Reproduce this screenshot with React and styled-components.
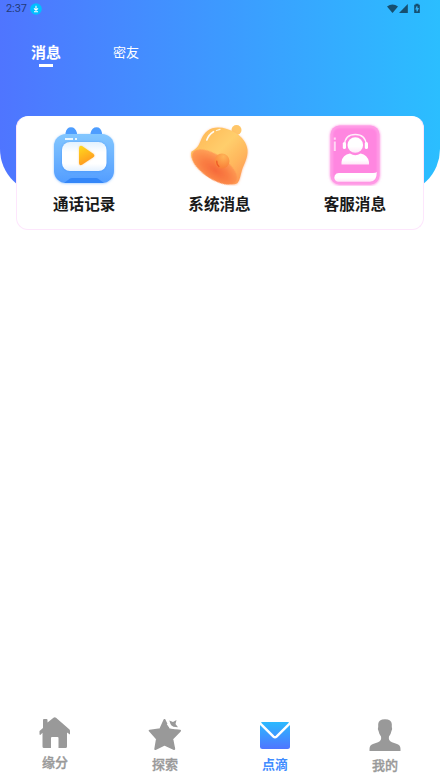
import React from 'react';
import styled, { createGlobalStyle } from 'styled-components';

const GlobalStyle = createGlobalStyle`
  * {
    box-sizing: border-box;
  }
  body {
    margin: 0;
    background: #fff;
    font-family: 'Noto Sans CJK SC', 'Noto Sans', sans-serif;
  }
  svg {
    display: block;
  }
`;

const Screen = styled.div`
  display: flex;
  flex-direction: column;
  width: 440px;
  height: 783px;
  overflow: hidden;
  background: #fff;
`;

const Header = styled.header`
  flex: none;
  height: 194px;
  border-radius: 0 0 45px 45px;
  background: linear-gradient(90deg, #4f75ff 0%, #2bbeff 100%);
`;

const StatusBar = styled.div`
  display: flex;
  align-items: center;
  height: 18px;
  padding: 0 19px 0 6px;
  color: #243a78;
  font: 11px/18px Roboto, sans-serif;
`;

const Clock = styled.span`
  width: 24px;
  letter-spacing: -0.1px;
`;

const StatusIcons = styled.div`
  margin-left: auto;
`;

const Tabs = styled.nav`
  display: flex;
  padding: 22px 0 0 31px;
`;

const Tab = styled.div`
  display: flex;
  flex-direction: column;
  align-items: center;
  width: 30px;
  margin-right: 50px;
  color: #fff;
  font-size: ${({ $active }) => ($active ? '15px' : '13px')};
  font-weight: ${({ $active }) => ($active ? 700 : 400)};
  line-height: 23px;
  white-space: nowrap;

  &::after {
    content: '';
    width: 14px;
    height: 3px;
    margin-top: 1px;
    background: ${({ $active }) => ($active ? '#fff' : 'transparent')};
  }
`;

const Card = styled.section`
  display: grid;
  grid-template-columns: repeat(3, 1fr);
  flex: none;
  height: 114px;
  margin: -78px 16px 0;
  border: 1px solid #fde6fc;
  border-top-color: #fff;
  border-radius: 12px;
  background: #fff;
`;

const Entry = styled.div`
  display: flex;
  flex-direction: column;
  align-items: center;
  padding-top: 3px;
`;

const EntryLabel = styled.span`
  margin: 5px 0 0 -1px;
  color: #191919;
  font-size: 15.6px;
  font-weight: 700;
  line-height: 24px;
`;

const Content = styled.main`
  flex: 1;
`;

const BottomNav = styled.nav`
  display: grid;
  grid-template-columns: repeat(4, 1fr);
  flex: none;
  height: 68px;
`;

const NavItem = styled.div`
  display: flex;
  flex-direction: column;
  align-items: center;
  padding-top: ${({ $top }) => $top || 0}px;
  color: ${({ $active }) => ($active ? '#3f8cff' : '#999')};
  font-size: 13px;
  font-weight: ${({ $active }) => ($active ? 700 : 500)};
  line-height: 20px;
`;

const NavLabel = styled.span`
  margin-top: ${({ $gap }) => $gap}px;
  -webkit-text-stroke: ${({ $active }) => ($active ? '0' : '0.35px')} currentColor;
`;

const CallIcon = () => (
  <svg width="69" height="66" viewBox="0 0 69 66">
    <defs>
      <linearGradient id="tv" x1="0" y1="0" x2="0" y2="1">
        <stop offset="0" stopColor="#83c7ff" />
        <stop offset="1" stopColor="#539dff" />
      </linearGradient>
      <linearGradient id="play" x1="0" y1="0" x2="0.4" y2="1">
        <stop offset="0" stopColor="#ffdc1c" />
        <stop offset="1" stopColor="#ff9820" />
      </linearGradient>
      <linearGradient id="glass" x1="0" y1="0" x2="0" y2="1">
        <stop offset="0" stopColor="#e2f2ff" />
        <stop offset="0.35" stopColor="#fff" />
        <stop offset="0.75" stopColor="#fff" />
        <stop offset="1" stopColor="#e6f2ff" />
      </linearGradient>
      <filter id="tvGlow" x="-20%" y="-20%" width="140%" height="140%">
        <feDropShadow dx="0" dy="0.5" stdDeviation="1" floodColor="#5aa4ff" floodOpacity="0.6" />
      </filter>
      <filter id="soft" x="-40%" y="-40%" width="180%" height="180%">
        <feGaussianBlur stdDeviation="0.9" />
      </filter>
    </defs>
    <path d="M15.500 17 V13 Q16.500 7.300 21 7.300 Q25.500 7.300 27 13 V17Z M40.500 17 V13 Q42 7.300 46.500 7.300 Q51 7.300 52 13 V17Z" fill="#4d9dff" />
    <rect x="4" y="14" width="60" height="49" rx="12" fill="url(#tv)" filter="url(#tvGlow)" />
    <rect x="12" y="22" width="44.500" height="29.500" rx="8" fill="#3488f7" opacity=".5" filter="url(#soft)" />
    <rect x="12" y="22" width="44.500" height="29" rx="8" fill="url(#glass)" />
    <path d="M15 18h8v2h-8z M25 18h2v2h-2z" fill="#e8f6ff" />
    <path d="M14 63 L20 58.500 Q21 58 22 58 H46 Q47.500 58 48.500 59 L54 63Z" fill="#3486f8" />
    <path d="M29 28.500 Q29 24.800 32 26 L43.300 33.700 Q45.500 35.500 43.300 37.300 L32 44.800 Q29 46 29 43Z" fill="#ffa633" opacity=".45" filter="url(#soft)" />
    <path d="M29 28.500 Q29 24.800 32 26 L43.300 33.700 Q45.500 35.500 43.300 37.300 L32 44.800 Q29 46 29 43Z" fill="url(#play)" />
  </svg>
);

const BellIcon = () => (
  <svg width="68" height="66" viewBox="0 0 68 66">
    <defs>
      <linearGradient id="bell" x1="0.1" y1="0.1" x2="0.9" y2="0.9">
        <stop offset="0" stopColor="#ffb957" />
        <stop offset="0.45" stopColor="#ffce6c" />
        <stop offset="0.75" stopColor="#ffb65c" />
        <stop offset="1" stopColor="#ff9a55" />
      </linearGradient>
      <radialGradient id="bellMouth" cx="0.55" cy="0.6" r="0.6">
        <stop offset="0" stopColor="#f6693a" />
        <stop offset="0.5" stopColor="#fa8044" />
        <stop offset="1" stopColor="#ff9f56" />
      </radialGradient>
      <radialGradient id="clapper" cx="0.6" cy="0.2" r="0.8">
        <stop offset="0" stopColor="#ffb557" />
        <stop offset="1" stopColor="#fa8038" />
      </radialGradient>
      <filter id="bellGlow" x="-20%" y="-20%" width="140%" height="140%">
        <feDropShadow dx="0" dy="0.5" stdDeviation="1.1" floodColor="#ff9b65" floodOpacity="0.7" />
      </filter>
      <filter id="bellSoft" x="-20%" y="-20%" width="140%" height="140%">
        <feGaussianBlur stdDeviation="0.5" />
      </filter>
    </defs>
    <circle cx="50.500" cy="10" r="5" fill="#ffc668" />
    <g filter="url(#bellGlow)">
      <path
        d="M5.500 31.500 C11 29 13 25 15 20 C18 12 24 7.500 32 7.500 C38 7.500 44 9.500 49 12.500 C56 16.500 61 23 61.500 30 C62 38 58 44 56 50 C54.500 55 54 60 51.500 63 C47 67 30 61 20 54.500 C9 47 3 37 5.500 31.500Z"
        fill="url(#bell)"
      />
    </g>
    <ellipse cx="28.500" cy="47" rx="26" ry="12" transform="rotate(34 28.500 47)" fill="url(#bellMouth)" filter="url(#bellSoft)" />
    <circle cx="36" cy="41" r="7.500" fill="url(#clapper)" />
    <path d="M30.800 41 Q30.500 44.500 33 46.500" fill="none" stroke="#ee5a26" strokeWidth="1.200" strokeLinecap="round" />
    <path d="M20.800 20 Q22.500 14.800 27.500 11.700" fill="none" stroke="#fffaf0" strokeWidth="1.600" strokeLinecap="round" />
    <path d="M30.500 10.500 L34 9.300" stroke="#fff4dc" strokeWidth="1.300" strokeLinecap="round" />
  </svg>
);

const ServiceIcon = () => (
  <svg width="68" height="66" viewBox="0 0 68 66">
    <defs>
      <linearGradient id="page" x1="0" y1="0" x2="0" y2="1">
        <stop offset="0" stopColor="#fff" />
        <stop offset="0.6" stopColor="#fff" />
        <stop offset="1" stopColor="#ffe6f8" />
      </linearGradient>
      <filter id="pinkGlow" x="-20%" y="-20%" width="140%" height="140%">
        <feDropShadow dx="0" dy="0.7" stdDeviation="1.4" floodColor="#ff86db" floodOpacity="0.8" />
      </filter>
      <filter id="pinkSoft" x="-20%" y="-20%" width="140%" height="140%">
        <feGaussianBlur stdDeviation="0.8" />
      </filter>
    </defs>
    <rect x="9.500" y="5.500" width="49" height="59" rx="9" fill="#ff86e0" filter="url(#pinkGlow)" />
    <rect x="10.500" y="6.500" width="47" height="57" rx="8" fill="none" stroke="#ffa8ea" strokeWidth="2" filter="url(#pinkSoft)" />
    <path d="M12.800 17.500h2v2.200h-2z M12.800 21.500h2v9.500h-2z" fill="#ffd7f4" />
    <circle cx="34.300" cy="25" r="7.800" fill="url(#page)" />
    <path d="M23.500 25 Q24 14.500 34.300 14.500 Q44.500 14.500 45.300 25" fill="none" stroke="#fff0fa" strokeWidth="1.300" />
    <rect x="21.800" y="22" width="3.200" height="7" rx="1.600" fill="#fff" />
    <rect x="43.800" y="22" width="3.200" height="7" rx="1.600" fill="#fff" />
    <path d="M20.500 44.500 V42 Q21.500 34.500 29 33.500 Q34.300 37 39.600 33.500 Q46.500 34.500 48 42 V44.500Z" fill="url(#page)" />
    <path d="M15.500 53.500 Q16.500 53 18 53 H52 Q55 53 55.800 52 Q56 61.500 49 61.700 H17 Q13.300 61 13.300 57.500 Q13.300 55 15.500 53.500Z" fill="url(#page)" />
  </svg>
);

const HomeIcon = () => (
  <svg width="32" height="32" viewBox="0 0 32 32" fill="#999">
    <path d="M4 8 V3 Q4 2 5 2 H7.500 Q8.500 2 8.500 3 V5.500 L14.500 .7 Q15.700 -.3 17 .7 L30.500 12.500 Q31 13 31 14 V17.500 L28 15.500 V29.500 Q28 31 26.500 31 H19.500 V21 Q19.500 20 18.500 20 H13 Q12 20 12 21 V31 H5 Q3.500 31 3.500 29.500 V15.800 L1.300 18 L.5 17.500 V14 L4 11Z" />
  </svg>
);

const StarIcon = () => (
  <svg width="34" height="32" viewBox="0 0 34 32" fill="#999">
    <path
      d="M16.500 1 L20.800 10.200 L32 11.700 L24.200 19.800 L26.200 30 L16.500 25.700 L7.300 30 L9 19.800 L1.700 11.700 L12.300 10.200Z"
      stroke="#999"
      strokeWidth="2"
      strokeLinejoin="round"
    />
    <path d="M19.500 5 Q23 11.500 32 8.500" fill="none" stroke="#fff" strokeWidth="1.500" />
    <path d="M21.300 1.500 L25 3 L28.500 1 L27.500 5 L30 8.200 L25.500 7.800 Q23 6.500 22.500 5Z" />
  </svg>
);

const MailIcon = () => (
  <svg width="30" height="27" viewBox="0 0 30 27">
    <defs>
      <linearGradient id="mail" x1="0" y1="0" x2="0" y2="1">
        <stop offset="0" stopColor="#2bbaff" />
        <stop offset="1" stopColor="#4f75ff" />
      </linearGradient>
    </defs>
    <rect width="30" height="27" rx="2.500" fill="url(#mail)" />
    <path d="M-.5 .8 L13.500 14.600 Q15 16 16.500 14.600 L30.500 .8" fill="none" stroke="#fff" strokeWidth="2.500" />
  </svg>
);

const UserIcon = () => (
  <svg width="32" height="32" viewBox="0 0 32 32" fill="#999">
    <path d="M16 .2 Q22.500 .2 22.800 5 V8 Q23.800 9.500 22.300 12.500 Q21.800 15.500 20 17.500 Q19 21.500 23 23.300 L28 25 Q31.500 26.200 31.500 30 V32 H.5 V30 Q.5 26.200 4 25 L9 23.300 Q13 21.500 12 17.500 Q10.200 15.500 9.700 12.500 Q8.200 9.500 9.200 8 V5 Q9.500 .2 16 .2Z" />
  </svg>
);

const DownloadIcon = () => (
  <svg width="12" height="12" viewBox="0 0 12 12">
    <circle cx="6" cy="6" r="5.800" fill="#00bfff" />
    <path d="M6 2.800 V7 M4 5.300 L6 7.300 L8 5.300 M4 8.800 H8" fill="none" stroke="#fff" strokeWidth="1.100" />
  </svg>
);

const SignalIcons = () => (
  <svg width="34" height="12" viewBox="0 0 34 12" fill="#164f70">
    <path d="M0 3.500 Q5.500 -.3 11 3.500 L5.500 10Z" />
    <path d="M20.800 1 V10 H12Z" />
    <path d="M28.500 .8 H31.500 V1.800 H32.800 V10 H27.200 V1.800 H28.500Z" />
    <path d="M29.500 3.200 H30.500 V5 H32 L30.500 8.500 H29.500 V6.500 H28.200Z" fill="#30b2f8" />
  </svg>
);

const entries = [
  { label: '通话记录', Icon: CallIcon },
  { label: '系统消息', Icon: BellIcon },
  { label: '客服消息', Icon: ServiceIcon },
];

const navItems = [
  { label: '缘分', Icon: HomeIcon, top: 2, gap: 3 },
  { label: '探索', Icon: StarIcon, top: 4, gap: 3 },
  { label: '点滴', Icon: MailIcon, top: 7, gap: 5, active: true },
  { label: '我的', Icon: UserIcon, top: 4, gap: 4 },
];

function App() {
  return (
    <Screen>
      <GlobalStyle />
      <Header>
        <StatusBar>
          <Clock>2:37</Clock>
          <DownloadIcon />
          <StatusIcons>
            <SignalIcons />
          </StatusIcons>
        </StatusBar>
        <Tabs>
          <Tab $active>消息</Tab>
          <Tab>密友</Tab>
        </Tabs>
      </Header>
      <Card>
        {entries.map(({ label, Icon }) => (
          <Entry key={label}>
            <Icon />
            <EntryLabel>{label}</EntryLabel>
          </Entry>
        ))}
      </Card>
      <Content />
      <BottomNav>
        {navItems.map(({ label, Icon, top, gap, active }) => (
          <NavItem key={label} $top={top} $active={active}>
            <Icon />
            <NavLabel $gap={gap} $active={active}>
              {label}
            </NavLabel>
          </NavItem>
        ))}
      </BottomNav>
    </Screen>
  );
}

export default App;
